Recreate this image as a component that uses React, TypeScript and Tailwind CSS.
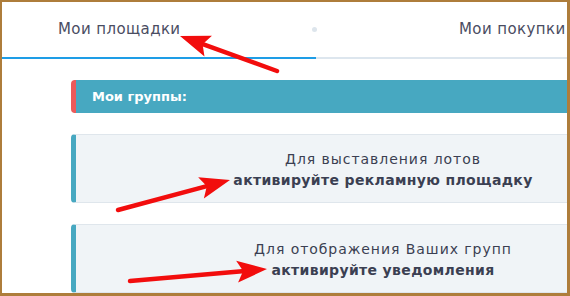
import React from "react";

const tabs = [
  { label: "Мои площадки", active: true },
  { label: "Мои покупки", active: false },
];

const notices = [
  { line: "Для выставления лотов", action: "активируйте рекламную площадку" },
  { line: "Для отображения Ваших групп", action: "активируйте уведомления" },
];

// red annotation arrows drawn over the screenshot
const arrows = [
  { x1: 277, y1: 71, x2: 180, y2: 36 },
  { x1: 118, y1: 210, x2: 230, y2: 180 },
  { x1: 130, y1: 281, x2: 267, y2: 269 },
];

function Arrow({ x1, y1, x2, y2 }: { x1: number; y1: number; x2: number; y2: number }) {
  const dx = x2 - x1;
  const dy = y2 - y1;
  const len = Math.hypot(dx, dy);
  const ux = dx / len;
  const uy = dy / len;
  const head = 30;
  const half = 11;
  const bx = x2 - ux * head;
  const by = y2 - uy * head;
  const pts = `${x2},${y2} ${bx - uy * half},${by + ux * half} ${bx + ux * 6},${by + uy * 6} ${bx + uy * half},${by - ux * half}`;
  return (
    <g>
      <line x1={x1} y1={y1} x2={bx + ux * 8} y2={by + uy * 8} stroke="#f20d0d" strokeWidth={4.5} strokeLinecap="round" />
      <polygon points={pts} fill="#f20d0d" />
    </g>
  );
}

export default function App() {
  return (
    <div className="relative w-[570px] h-[296px] overflow-hidden bg-white border-[#ae7d3b] border-t-2 border-l-2 border-r-[3px] border-b-[3px] font-['DejaVu_Sans',sans-serif]">
      <div className="w-[700px]">
        <div className="flex items-center h-[55px] text-[15px] tracking-[0.4px] text-[#4a4d62]">
          <div className="w-[310px] pl-[56px]">{tabs[0].label}</div>
          <span className="w-[5px] h-[5px] rounded-full bg-[#dde5ec]" />
          <div className="pl-[142px]">{tabs[1].label}</div>
        </div>
        <div className="flex h-[2px]">
          <div className="w-[314px] bg-[#1e9de6]" />
          <div className="flex-1 bg-[#dde6ee]" />
        </div>

        <div className="ml-[69px] w-[620px] pt-[21px] flex flex-col gap-[21px]">
          <div className="h-[33px] flex items-center pl-[16px] bg-[#47a8c1] border-l-[5px] border-[#ec5a5a] rounded-l-[4px] text-white font-bold text-[13px]">
            Мои группы:
          </div>
          {notices.map((n) => (
            <div
              key={n.line}
              className="h-[69px] flex flex-col items-center justify-center pt-[3px] bg-[#f0f4f7] border border-[#dfe6ec] border-l-[5px] border-l-[#47a8c1] rounded-l-[4px] text-[14px] leading-[21px] text-[#3b3f52]"
            >
              <div className="tracking-[0.95px]">{n.line}</div>
              <div className="font-bold tracking-[0.35px]">{n.action}</div>
            </div>
          ))}
        </div>
      </div>

      <svg className="absolute -left-[2px] -top-[2px] pointer-events-none" width={570} height={296}>
        {arrows.map((a, i) => (
          <Arrow key={i} {...a} />
        ))}
      </svg>
    </div>
  );
}
